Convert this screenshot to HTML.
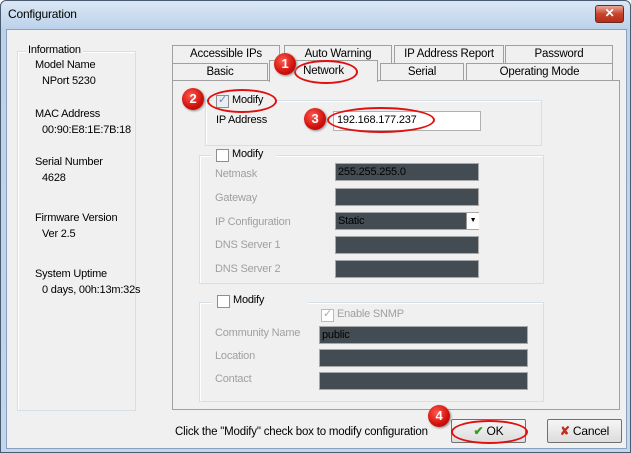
<!DOCTYPE html><html><head><style>
body{margin:0;width:631px;height:453px;overflow:hidden;font-family:"Liberation Sans",sans-serif;font-size:11px;color:#000;background:#fff;letter-spacing:-0.2px}
.a{position:absolute}
#win{left:0;top:0;width:629px;height:451px;border:1px solid #4a5a70;background:linear-gradient(#dbe7f5,#bcd2ea 28px,#c2d6ec);border-radius:6px 6px 0 0}
#body{left:6px;top:29px;width:619px;height:418px;background:#f0f0f0;border:1px solid #8aa0bc}
.gb{position:absolute;border:1px solid #d5dfe5;box-shadow:inset 1px 1px #fff}
.t{position:absolute;white-space:nowrap}
.g{color:#a0a0a0}
.tab{position:absolute;height:17px;border:1px solid #a0a0a0;border-bottom:none;background:#f0f0f0;text-align:center;line-height:17px;font-size:11.5px}
.in{position:absolute;background:#434c53;border:1px solid #a8a8a8;height:16px;line-height:16px;font-size:11px;padding-left:2px;box-sizing:content-box}
.cb{position:absolute;width:11px;height:11px;border:1px solid #8f8f8f;background:#fff}
.mk{position:absolute;width:22px;height:22px;border-radius:50%;background:radial-gradient(circle at 40% 35%,#ff5a50,#d0100a 60%,#a00);color:#fff;font-weight:bold;font-size:13px;text-align:center;line-height:22px;box-shadow:1px 1px 2px #888}
.ov{position:absolute;border:2px solid #e01010;border-radius:50%}
.btn{position:absolute;border:1px solid #707070;background:linear-gradient(#f6f6f6,#dcdcdc);border-radius:2px;font-size:12px;text-align:center;line-height:22px}
</style></head><body>
<div class="a" id="win"></div>
<div class="t" style="left:8px;top:7px;font-size:12px">Configuration</div>
<div class="a" style="left:595px;top:5px;width:27px;height:16px;border:1px solid #6b2a20;border-radius:3px;background:linear-gradient(#e9a99c,#c7442c 50%,#b52d1a);color:#fff;font-weight:bold;text-align:center;line-height:15px;font-size:12px">✕</div>
<div class="a" id="body"></div>
<div class="gb" style="left:17px;top:51px;width:117px;height:358px"></div>
<div class="t" style="left:26px;top:44px;background:#f0f0f0;padding:0 2px">Information</div>
<div class="t" style="left:35px;top:59px">Model Name</div>
<div class="t" style="left:42px;top:75px">NPort 5230</div>
<div class="t" style="left:35px;top:108px">MAC Address</div>
<div class="t" style="left:42px;top:124px">00:90:E8:1E:7B:18</div>
<div class="t" style="left:35px;top:156px">Serial Number</div>
<div class="t" style="left:42px;top:172px">4628</div>
<div class="t" style="left:35px;top:212px">Firmware Version</div>
<div class="t" style="left:42px;top:228px">Ver 2.5</div>
<div class="t" style="left:35px;top:268px">System Uptime</div>
<div class="t" style="left:42px;top:284px">0 days, 00h:13m:32s</div>
<div class="tab" style="left:172px;top:45px;width:106px">Accessible IPs</div>
<div class="tab" style="left:284px;top:45px;width:106px">Auto Warning</div>
<div class="tab" style="left:394px;top:45px;width:108px">IP Address Report</div>
<div class="tab" style="left:505px;top:45px;width:106px">Password</div>
<div class="tab" style="left:172px;top:63px;width:94px">Basic</div>
<div class="tab" style="left:380px;top:63px;width:82px">Serial</div>
<div class="tab" style="left:466px;top:63px;width:145px">Operating Mode</div>
<div class="a" style="left:172px;top:80px;width:446px;height:328px;border:1px solid #a0a0a0;background:#f0f0f0"></div>
<div class="tab" style="left:269px;top:60px;width:107px;height:21px;line-height:20px">Network</div>
<div class="gb" style="left:205px;top:100px;width:335px;height:44px"></div>
<div class="a" style="left:212px;top:92px;width:64px;height:14px;background:#f0f0f0"></div>
<div class="cb" style="left:216px;top:95px;background:#e8eef4"><span style="position:absolute;left:1px;top:-3px;color:#6e8aaa;font-size:11px">✓</span></div>
<div class="t" style="left:232px;top:94px">Modify</div>
<div class="t" style="left:216px;top:114px">IP Address</div>
<div class="a" style="left:333px;top:111px;width:146px;height:18px;border:1px solid #b0b0b0;background:#fff"></div>
<div class="t" style="left:337px;top:114px">192.168.177.237</div>
<div class="gb" style="left:199px;top:155px;width:343px;height:127px"></div>
<div class="a" style="left:212px;top:147px;width:64px;height:14px;background:#f0f0f0"></div>
<div class="cb" style="left:216px;top:149px"></div>
<div class="t" style="left:232px;top:148px">Modify</div>
<div class="t g" style="left:215px;top:168px">Netmask</div>
<div class="t g" style="left:215px;top:192px">Gateway</div>
<div class="t g" style="left:215px;top:216px">IP Configuration</div>
<div class="t g" style="left:215px;top:239px">DNS Server 1</div>
<div class="t g" style="left:215px;top:263px">DNS Server 2</div>
<div class="in" style="left:335px;top:163px;width:140px">255.255.255.0</div>
<div class="in" style="left:335px;top:188px;width:140px"></div>
<div class="in" style="left:335px;top:212px;width:140px">Static</div>
<div class="a" style="left:466px;top:213px;width:12px;height:16px;background:#fff;border-left:1px solid #999;font-size:7px;text-align:center;line-height:16px">▼</div>
<div class="in" style="left:335px;top:236px;width:140px"></div>
<div class="in" style="left:335px;top:260px;width:140px"></div>
<div class="gb" style="left:199px;top:302px;width:343px;height:98px"></div>
<div class="a" style="left:212px;top:294px;width:96px;height:14px;background:#f0f0f0"></div>
<div class="cb" style="left:217px;top:295px"></div>
<div class="t" style="left:233px;top:294px">Modify</div>
<div class="cb" style="left:321px;top:309px;border-color:#bbb"><span style="position:absolute;left:1px;top:-3px;color:#aaa">✓</span></div>
<div class="t g" style="left:337px;top:308px">Enable SNMP</div>
<div class="t g" style="left:215px;top:327px">Community Name</div>
<div class="t g" style="left:215px;top:350px">Location</div>
<div class="t g" style="left:215px;top:373px">Contact</div>
<div class="in" style="left:319px;top:326px;width:205px">public</div>
<div class="in" style="left:319px;top:349px;width:205px"></div>
<div class="in" style="left:319px;top:372px;width:205px"></div>
<div class="t" style="left:175px;top:426px;font-size:11.5px">Click the "Modify" check box to modify configuration</div>
<div class="btn" style="left:451px;top:419px;width:73px;height:22px"><span style="color:#3a9a20;font-weight:bold">✔</span> OK</div>
<div class="btn" style="left:547px;top:419px;width:73px;height:22px"><span style="color:#c03020;font-weight:bold">✘</span> Cancel</div>
<div class="ov" style="left:294px;top:60px;width:60px;height:20px"></div>
<div class="mk" style="left:274px;top:53px">1</div>
<div class="ov" style="left:207px;top:89px;width:66px;height:20px"></div>
<div class="mk" style="left:182px;top:88px">2</div>
<div class="ov" style="left:327px;top:107px;width:104px;height:22px"></div>
<div class="mk" style="left:304px;top:108px">3</div>
<div class="ov" style="left:451px;top:420px;width:73px;height:20px"></div>
<div class="mk" style="left:428px;top:405px">4</div>
</body></html>
